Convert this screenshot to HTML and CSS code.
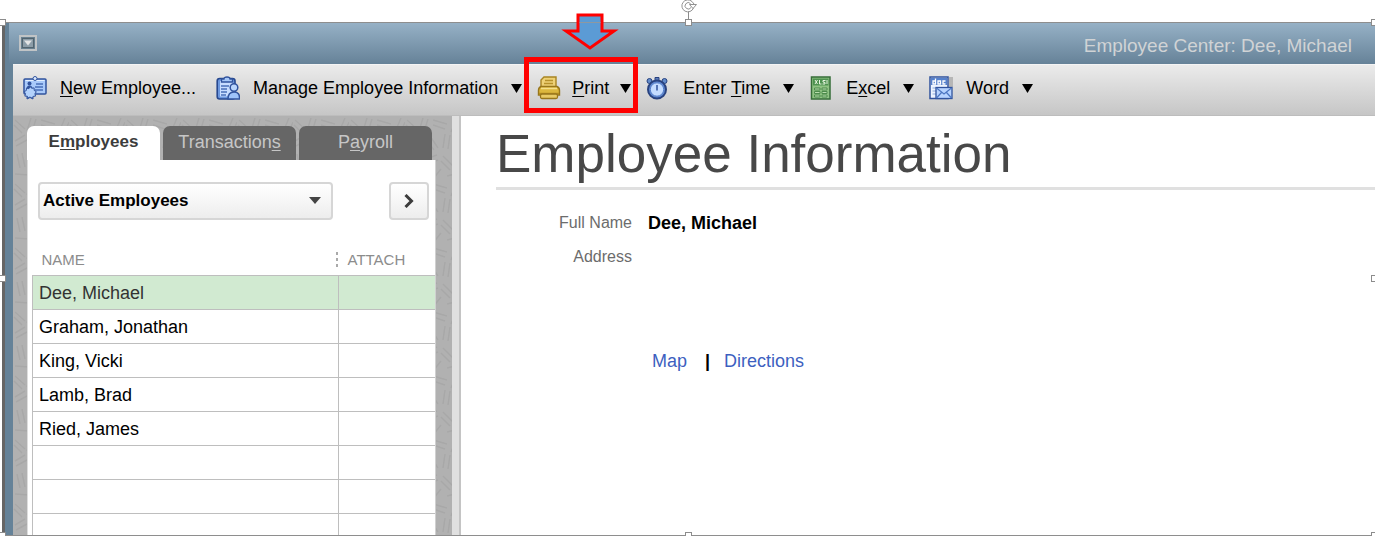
FILE: index.html
```html
<!DOCTYPE html>
<html lang="en">
<head>
<meta charset="utf-8">
<title>Employee Center: Dee, Michael</title>
<link rel="stylesheet" href="styles.css">
</head>
<body>
<div class="frame">
  <div class="window">
    <header class="titlebar">
      <button class="sysmenu" type="button" aria-label="Window menu">
        <svg width="18" height="16" viewBox="0 0 18 16"><rect x="1" y="1" width="16" height="14" fill="#68808f" stroke="#c0c4c6" stroke-width="2"/><rect x="3.500" y="3.500" width="11" height="9" fill="#8c9da8" stroke="#52646f"/><path d="M5 5.500h8l-4 5z" fill="#e2e4e5"/></svg>
      </button>
      <span class="title">Employee Center: Dee, Michael</span>
    </header>

    <nav class="toolbar">
      <button class="tool" type="button">
        <svg class="icon" viewBox="0 0 24 24"><rect x="1" y="3" width="22" height="15" rx="1" fill="#a9cafa" stroke="#31539d" stroke-width="1.500"/><path d="M2.500 4.500h19" stroke="#e4f0ff"/><circle cx="12" cy="2.500" r="2" fill="#dceaff" stroke="#31539d"/><circle cx="6.500" cy="7.500" r="2" fill="#31539d"/><path d="M3.500 13q0-3.500 3-3.500t3 3.500z" fill="#31539d"/><path d="M13 8h7M12 11h8M12 14h8" stroke="#4a70b9" stroke-width="1.300"/><path d="M4 17v6l3-1.500L10 23v-6z" fill="#5f8bd3" stroke="#31539d"/><path d="M7 10.500l1.700 1.800 2.400-.4.100 2.500 2.100 1.300-1.400 2.100.7 2.300-2.500.3L8.500 22 7 21l-2 1-.7-1.800-2.500-.1.700-2.400-1.400-2 2.200-1.200.2-2.400 2.400.6z" fill="#b3d2fc" stroke="#31539d"/></svg>
        <span><u>N</u>ew Employee...</span>
      </button>
      <button class="tool" type="button">
        <svg class="icon" viewBox="0 0 24 24"><rect x="1.200" y="2.500" width="17.800" height="20.500" rx="2.500" fill="#6c97de" stroke="#27488f" stroke-width="1.600"/><path d="M4 5h13v15.500H4z" fill="#c8ddff"/><path d="M5.500 6V3h2.500q0-2 3-2t3 2h2.500v3z" fill="#a7c8f8" stroke="#31539d" stroke-width="1.300"/><path d="M5 10h8M5 13h6M5 16h6M5 19h5" stroke="#4a70b9" stroke-width="1.300"/><path d="M12 23q0-7 6-7t5.500 7z" fill="#9ec3fa" stroke="#31539d" stroke-width="1.500"/><circle cx="18" cy="11.500" r="3.800" fill="#b9d5fd" stroke="#31539d" stroke-width="1.500"/></svg>
        <span>Manage Employee Information</span>
        <svg class="caret" viewBox="0 0 11 9"><path d="M0 0h11L5.500 9z"/></svg>
      </button>
      <button class="tool tool-print" type="button">
        <svg class="icon" viewBox="0 0 24 24"><path d="M4 12V4l3-3h12v11z" fill="#eed176" stroke="#a88422" stroke-width="1.400"/><path d="M8 4.500h8M7 7.500h9" stroke="#b8922b" stroke-width="1.300"/><path d="M4 10.500h16q2.500 1 2.500 4v4.500h-21v-4.500q0-3 2.500-4z" fill="#dcb73d" stroke="#98761b" stroke-width="1.400"/><path d="M4 12.500h16" stroke="#f5e08d" stroke-width="1.500"/><path d="M2 17.500h20" stroke="#b58e20" stroke-width="1.500"/><rect x="3.500" y="18" width="17" height="4.500" rx="1.500" fill="#e8ca65" stroke="#98761b" stroke-width="1.300"/></svg>
        <span><u>P</u>rint</span>
        <svg class="caret" viewBox="0 0 11 9"><path d="M0 0h11L5.500 9z"/></svg>
        <svg class="callout-arrow" width="58" height="38" viewBox="0 0 58 38"><path d="M17 2h24v16h12L29 35 5 18h12z" fill="#5b9bd5" stroke="#f00" stroke-width="3"/><path d="M18.500 9.500h21" stroke="#8f989f"/></svg>
      </button>
      <button class="tool" type="button">
        <svg class="icon" viewBox="0 0 24 24"><path d="M9 1.500h4v3H9z" fill="#5f7ebc" stroke="#28427f"/><circle cx="3.500" cy="5" r="2.500" fill="#638ccb" stroke="#28427f"/><circle cx="18.500" cy="5" r="2.500" fill="#638ccb" stroke="#28427f"/><circle cx="11" cy="13.500" r="9" fill="#5f89d1" stroke="#28427f" stroke-width="2"/><circle cx="11" cy="13.500" r="6.700" fill="#c4dcff" stroke="#567fc9"/><path d="M11 9v5.500" stroke="#31539d" stroke-width="1.500"/></svg>
        <span>Enter <u>T</u>ime</span>
        <svg class="caret" viewBox="0 0 11 9"><path d="M0 0h11L5.500 9z"/></svg>
      </button>
      <button class="tool" type="button">
        <svg class="icon" viewBox="0 0 24 24"><rect x="2.500" y="1" width="18.500" height="22" fill="#8fc383" stroke="#366d38" stroke-width="1.500"/><path d="M4 2.500h15.500v7H4z" fill="#4e9250"/><path d="M6 4l2.500 4M8.500 4L6 8M10.500 4v4h2M16.500 4.500H14v1.500l2 .5v1.500h-2.500M18 4v4" stroke="#e6f5df" fill="none"/><path d="M5.500 12h5.500v2H5.500zM13 12h5v2h-5zM5.500 15.500h5.500v2H5.500zM13 15.500h5v2h-5zM5.500 19h5.500v2H5.500zM13 19h5v2h-5z" fill="#b7dcab" stroke="#4d8b4c" stroke-width="1"/></svg>
        <span>E<u>x</u>cel</span>
        <svg class="caret" viewBox="0 0 11 9"><path d="M0 0h11L5.500 9z"/></svg>
      </button>
      <button class="tool" type="button">
        <svg class="icon" viewBox="0 0 24 24"><path d="M20 1h4v10h-4z" fill="#b6b6b6"/><rect x="1" y="1" width="18" height="21.500" fill="#edf4ff" stroke="#31539d" stroke-width="1.500"/><path d="M2 2h16v7H2z" fill="#5681cc"/><path d="M6.500 2.500V8H4V5h2.500M9 5h2.500v3H9zM16.500 5H14v3h2.500" stroke="#fff" fill="none" stroke-width="1.300"/><path d="M3.500 12h4M3.500 15h4M3.500 18h4" stroke="#8daada"/><rect x="7" y="11.500" width="16" height="11" fill="#b7d3ff" stroke="#31539d" stroke-width="1.300"/><path d="M7.500 12l7.500 6 7.500-6M7.500 22l5-5.500M22.500 22l-5-5.500" fill="none" stroke="#4c76c1" stroke-width="1.200"/></svg>
        <span>Word</span>
        <svg class="caret" viewBox="0 0 11 9"><path d="M0 0h11L5.500 9z"/></svg>
      </button>
    </nav>

    <div class="content">
      <aside class="side">
        <svg class="texture" width="100%" height="100%" aria-hidden="true">
          <defs><pattern id="hatch" width="56" height="64" patternUnits="userSpaceOnUse"><path d="M2 4l10 9M1 9l8 8M18 2l-4 13M23 3l-4 13M28 4l14 4M28 9l12 4M52 2l-6 14M56 6l-5 12M2 25l10-6M3 30l11-6M20 22l9 12M25 20l8 12M40 18l-2 14M45 19l-2 14M50 26l6 8M4 38l3 14M9 37l3 14M18 44l14-5M19 49l14-5M38 40l10 10M36 45l9 9M53 40l-1 15M2 58l14 1M22 62l8-10M28 63l8-10M42 60l12-3" stroke="#a8a8a8" stroke-width="1.500" fill="none"/></pattern></defs>
          <rect width="100%" height="100%" fill="url(#hatch)"/>
        </svg>
        <div class="tabs" role="tablist">
          <button class="tab active" type="button" role="tab" aria-selected="true">E<u>m</u>ployees</button>
          <button class="tab" type="button" role="tab">Transaction<u>s</u></button>
          <button class="tab" type="button" role="tab">P<u>a</u>yroll</button>
        </div>
        <div class="panel">
          <div class="filters">
            <div class="combo">
              <select aria-label="Employee filter"><option>Active Employees</option></select>
              <svg class="combo-caret" width="12" height="7" viewBox="0 0 12 7"><path d="M0 0h12L6 7z" fill="#444"/></svg>
            </div>
            <button class="expand" type="button" aria-label="Expand list">
              <svg width="10" height="14" viewBox="0 0 10 14"><path d="M1.500 1L7.500 7l-6 6" fill="none" stroke="#3c3c3c" stroke-width="3"/></svg>
            </button>
          </div>
          <table class="list">
            <thead><tr><th class="col-name" scope="col"><span class="head">Name <svg width="3" height="16" viewBox="0 0 3 16"><path d="M0 0h2v3H0zM0 6h2v3H0zM0 12h2v3H0z" fill="#aaa"/></svg></span></th><th scope="col">Attach</th></tr></thead>
            <tbody>
              <tr class="selected"><td>Dee, Michael</td><td></td></tr>
              <tr><td>Graham, Jonathan</td><td></td></tr>
              <tr><td>King, Vicki</td><td></td></tr>
              <tr><td>Lamb, Brad</td><td></td></tr>
              <tr><td>Ried, James</td><td></td></tr>
              <tr><td></td><td></td></tr>
              <tr><td></td><td></td></tr>
              <tr><td></td><td></td></tr>
            </tbody>
          </table>
        </div>
      </aside>
      <div class="splitter"></div>
      <main class="main">
        <h1>Employee Information</h1>
        <dl class="fields">
          <dt>Full Name</dt><dd>Dee, Michael</dd>
          <dt>Address</dt><dd></dd>
        </dl>
        <div class="links"><a href="#map">Map</a><span class="bar">|</span><a href="#directions">Directions</a></div>
      </main>
    </div>
  </div>

  <div class="handle top left"></div>
  <div class="handle top center"></div>
  <div class="handle top right"></div>
  <div class="handle middle left"></div>
  <div class="handle middle right"></div>
  <div class="handle bottom left"></div>
  <div class="handle bottom center"></div>
  <div class="handle bottom right"></div>
  <svg class="rotate" width="18" height="20" viewBox="0 0 18 20"><path d="M13.500 8A6 6 0 1 1 12 1.500" fill="none" stroke="#929292"/><path d="M11 7.500A3.200 3.200 0 1 1 10.500 3.500" fill="none" stroke="#929292"/><path d="M12 1.500l2 2.500M9.500 4.500h7L13 8.500z" fill="#fff" stroke="#929292"/><path d="M8.500 11.500V20" stroke="#8c8c8c"/></svg>
</div>
</body>
</html>
```
FILE: styles.css
```css
* { box-sizing: border-box; }

body {
  margin: 0;
  background: #fff;
  color: #000;
  font: 18px/20px "Liberation Sans", Arial, sans-serif;
  overflow: hidden;
}

button, select {
  margin: 0;
  padding: 0;
  border: 0;
  background: none;
  color: inherit;
  font: inherit;
}

u { text-underline-offset: 2px; }

/* Selected picture frame */
.frame {
  position: relative;
  height: calc(100vh - 26px);
  margin-top: 22px;
  border-top: 1px solid #8e8e8e;
  border-bottom: 1px solid #8e8e8e;
}

.window {
  display: flex;
  flex-direction: column;
  height: 100%;
  margin-left: 2px;
  border-left: 3px solid #666;
  padding-left: 8px;
  background: #658298;
}

/* Title bar */
.titlebar {
  display: flex;
  flex: none;
  align-items: center;
  justify-content: space-between;
  height: 41px;
  margin-left: -4px;
  padding: 4px 23px 0 10px;
  background: linear-gradient(#96b1c6, #668298);
}

.sysmenu { display: flex; margin-bottom: 6px; }
.title { color: #d0d3d5; font-size: 19px; }

/* Toolbar */
.toolbar {
  display: flex;
  flex: none;
  gap: 15px;
  height: 52px;
  padding: 0 10px 4px;
  border-top: 1px solid #f4f4f4;
  border-bottom: 1px solid #bdbdbd;
  background: linear-gradient(#ebebeb, #c6c6c6);
}

.tool {
  position: relative;
  display: flex;
  align-items: center;
  gap: 13px;
  white-space: nowrap;
}

.icon { width: 24px; height: 24px; }
.caret { width: 11px; height: 9px; }
.tool:first-child { margin-right: 5px; }
.tool-print { gap: 11px; }

/* Highlight drawn over the print button */
.tool-print::after {
  content: "";
  position: absolute;
  inset: -8px -7px -2px -13px;
  border: 5px solid #f00;
}

.callout-arrow {
  position: absolute;
  left: 24px;
  top: -52px;
}

/* Content columns */
.content { display: flex; flex: 1; min-height: 0; }

.side {
  position: relative;
  display: flex;
  flex-direction: column;
  width: 439px;
  padding: 10px 16px 0 14px;
  background: #b1b1b1;
  overflow: hidden;
}

.texture { position: absolute; inset: 0; }

.tabs {
  position: relative;
  display: flex;
  flex: none;
  gap: 3px;
  height: 34px;
  padding-right: 4px;
}

.tab {
  flex: 1;
  padding-bottom: 2px;
  border-radius: 7px 7px 0 0;
  background: #666;
  color: #c6c6c6;
}

.tab.active { background: #fff; color: #3c3c3c; font-size: 17px; font-weight: bold; }

.panel {
  position: relative;
  flex: 1;
  min-height: 0;
  padding: 22px 0 0 4px;
  border-left: 1px solid #ddd;
  border-right: 1px solid #d0d0d0;
  background: #fff;
  overflow: hidden;
}

.filters {
  display: flex;
  align-items: center;
  justify-content: space-between;
  padding: 0 6px;
}

.combo { position: relative; width: 295px; }

.combo select {
  display: block;
  width: 100%;
  height: 38px;
  padding-left: 3px;
  border: 2px solid #d6d6d6;
  border-radius: 4px;
  background: linear-gradient(#fff, #ededed);
  font-size: 17px;
  font-weight: bold;
  appearance: none;
}

.combo-caret { position: absolute; right: 12px; top: 15px; }

.expand {
  display: flex;
  align-items: center;
  justify-content: center;
  width: 40px;
  height: 38px;
  border: 2px solid #d6d6d6;
  border-radius: 4px;
  background: linear-gradient(#fff, #ededed);
}

/* Employee list */
.list {
  width: 100%;
  margin-top: 26px;
  border-collapse: collapse;
  table-layout: fixed;
}

.list th {
  height: 29px;
  padding: 0 9px;
  color: #8c8c8c;
  font-size: 15px;
  font-weight: normal;
  text-align: left;
  text-transform: uppercase;
}

.list .col-name { width: 306px; padding-right: 0; }
.head { display: flex; align-items: center; justify-content: space-between; }

.list td {
  height: 34px;
  padding: 2px 6px 0;
  border: 1px solid #bebebe;
}

.list td:last-child { border-right: 0; }
.list .selected td { background: #d1ead1; color: #333; }

.splitter {
  width: 9px;
  border-right: 2px solid #c4c4c4;
  background: #e0e0e0;
}

/* Detail pane */
.main { flex: 1; min-width: 0; padding: 8px 0 0 35px; background: #fff; }

h1 {
  margin: 0;
  padding-bottom: 3px;
  border-bottom: 3px solid #e0e0e0;
  color: #484848;
  font-size: 53px;
  font-weight: normal;
  line-height: 60px;
}

.fields {
  display: grid;
  grid-template-columns: 136px 1fr;
  grid-auto-rows: 20px;
  gap: 14px 16px;
  margin: 23px 0 0;
}

.fields dt { color: #6c6c6c; font-size: 16px; text-align: right; }
.fields dd { margin: 0; font-weight: bold; }

.links {
  display: flex;
  align-items: center;
  margin: 84px 0 0 156px;
}

.links a { color: #3d5fc0; text-decoration: none; }
.bar { margin: 0 14px 0 18px; font-weight: bold; }

/* Resize handles on the picture frame */
.handle {
  position: absolute;
  width: 7px;
  height: 7px;
  border: 1px solid #8c8c8c;
  background: #fff;
}

.top { top: -4px; }
.middle { top: calc(50% - 4px); }
.bottom { bottom: -4px; }
.left { left: -1px; }
.center { left: calc(50% - 3px); }
.right { right: -3px; }

.rotate { position: absolute; left: calc(50% - 8px); top: -23px; }
```
